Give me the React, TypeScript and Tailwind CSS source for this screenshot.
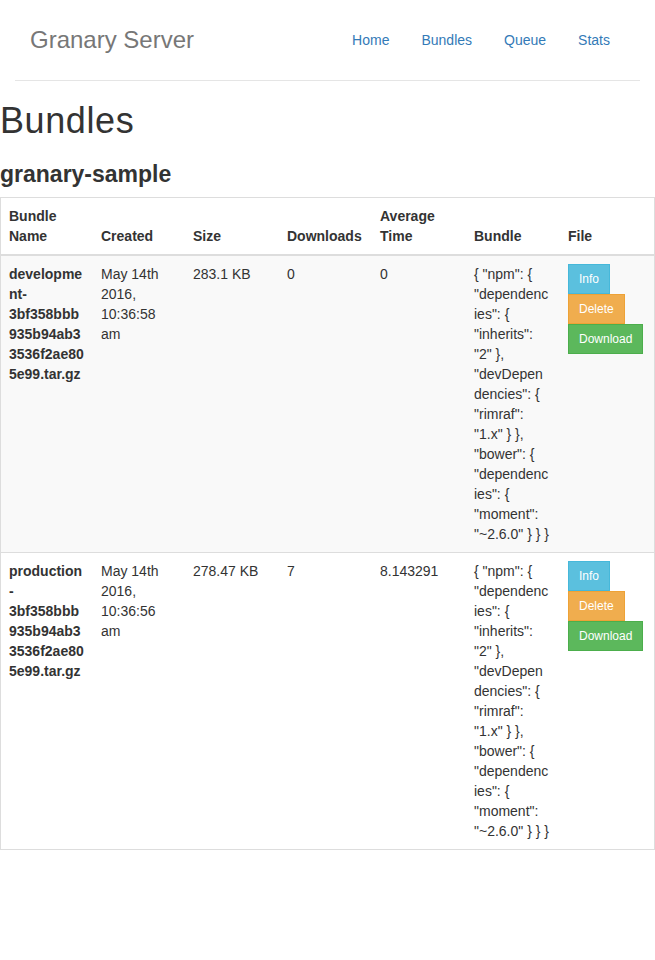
import { Fragment } from "react";

type Bundle = {
  name: string[];
  created: string[];
  size: string;
  downloads: string;
  avgTime: string;
  striped: boolean;
};

const bundleJson = [
  '{ "npm": {',
  '"dependenc',
  'ies": {',
  '"inherits":',
  '"2" },',
  '"devDepen',
  'dencies": {',
  '"rimraf":',
  '"1.x" } },',
  '"bower": {',
  '"dependenc',
  'ies": {',
  '"moment":',
  '"~2.6.0" } } }',
];

const bundles: Bundle[] = [
  {
    name: ["developme", "nt-", "3bf358bbb", "935b94ab3", "3536f2ae80", "5e99.tar.gz"],
    created: ["May 14th", "2016,", "10:36:58", "am"],
    size: "283.1 KB",
    downloads: "0",
    avgTime: "0",
    striped: true,
  },
  {
    name: ["production", "-", "3bf358bbb", "935b94ab3", "3536f2ae80", "5e99.tar.gz"],
    created: ["May 14th", "2016,", "10:36:56", "am"],
    size: "278.47 KB",
    downloads: "7",
    avgTime: "8.143291",
    striped: false,
  },
];

function Lines({ lines }: { lines: string[] }) {
  return (
    <>
      {lines.map((l, i) => (
        <Fragment key={i}>
          {i > 0 && <br />}
          {l}
        </Fragment>
      ))}
    </>
  );
}

const navLinks = ["Home", "Bundles", "Queue", "Stats"];

export default function App() {
  return (
    <div className="min-h-[960px] bg-white pt-5 font-['Liberation_Sans',Arial,sans-serif] text-sm leading-5 text-[#333]">
      <div className="mx-[15px] flex items-center justify-between border-b border-[#e5e5e5] px-[15px] pb-5">
        <h3 className="text-2xl leading-10 text-[#777]">Granary Server</h3>
        <nav className="flex">
          {navLinks.map((l, i) => (
            <a
              key={l}
              href="#"
              className={`px-[15px] py-[10px] text-[#337ab7] ${i > 0 ? "ml-[2px]" : ""}`}
            >
              {l}
            </a>
          ))}
        </nav>
      </div>

      <h1 className="mt-5 mb-[10px] text-[36px] leading-[1.1] tracking-[0.6px]">Bundles</h1>
      <h3 className="mt-5 mb-[10px] text-[23px] font-bold leading-[26.4px]">granary-sample</h3>

      <div className="border border-[#ddd]">
        <table className="w-full table-fixed border-collapse">
          <colgroup>
            <col className="w-[92px]" />
            <col className="w-[92px]" />
            <col className="w-[94px]" />
            <col className="w-[93px]" />
            <col className="w-[94px]" />
            <col className="w-[94px]" />
            <col />
          </colgroup>
          <thead>
            <tr className="border-b-2 border-[#ddd]">
              {["Bundle Name", "Created", "Size", "Downloads", "Average Time", "Bundle", "File"].map((h) => (
                <th key={h} className="p-2 text-left align-bottom font-bold">
                  {h}
                </th>
              ))}
            </tr>
          </thead>
          <tbody>
            {bundles.map((b, i) => (
              <tr
                key={i}
                className={`${i > 0 ? "border-t border-[#ddd]" : ""} ${b.striped ? "bg-[#f9f9f9]" : "bg-white"}`}
              >
                <td className="p-2 align-top font-bold">
                  <Lines lines={b.name} />
                </td>
                <td className="p-2 align-top">
                  <Lines lines={b.created} />
                </td>
                <td className="p-2 align-top">{b.size}</td>
                <td className="p-2 align-top">{b.downloads}</td>
                <td className="p-2 align-top">{b.avgTime}</td>
                <td className="p-2 align-top">
                  <Lines lines={bundleJson} />
                </td>
                <td className="p-2 align-top">
                  <div className="flex flex-col items-start">
                    <button className="border border-[#46b8da] bg-[#5bc0de] px-[10px] py-[5px] text-xs leading-[18px] text-white">
                      Info
                    </button>
                    <button className="border border-[#eea236] bg-[#f0ad4e] px-[10px] py-[5px] text-xs leading-[18px] text-white">
                      Delete
                    </button>
                    <button className="border border-[#4cae4c] bg-[#5cb85c] px-[10px] py-[5px] text-xs leading-[18px] text-white">
                      Download
                    </button>
                  </div>
                </td>
              </tr>
            ))}
          </tbody>
        </table>
      </div>
    </div>
  );
}
